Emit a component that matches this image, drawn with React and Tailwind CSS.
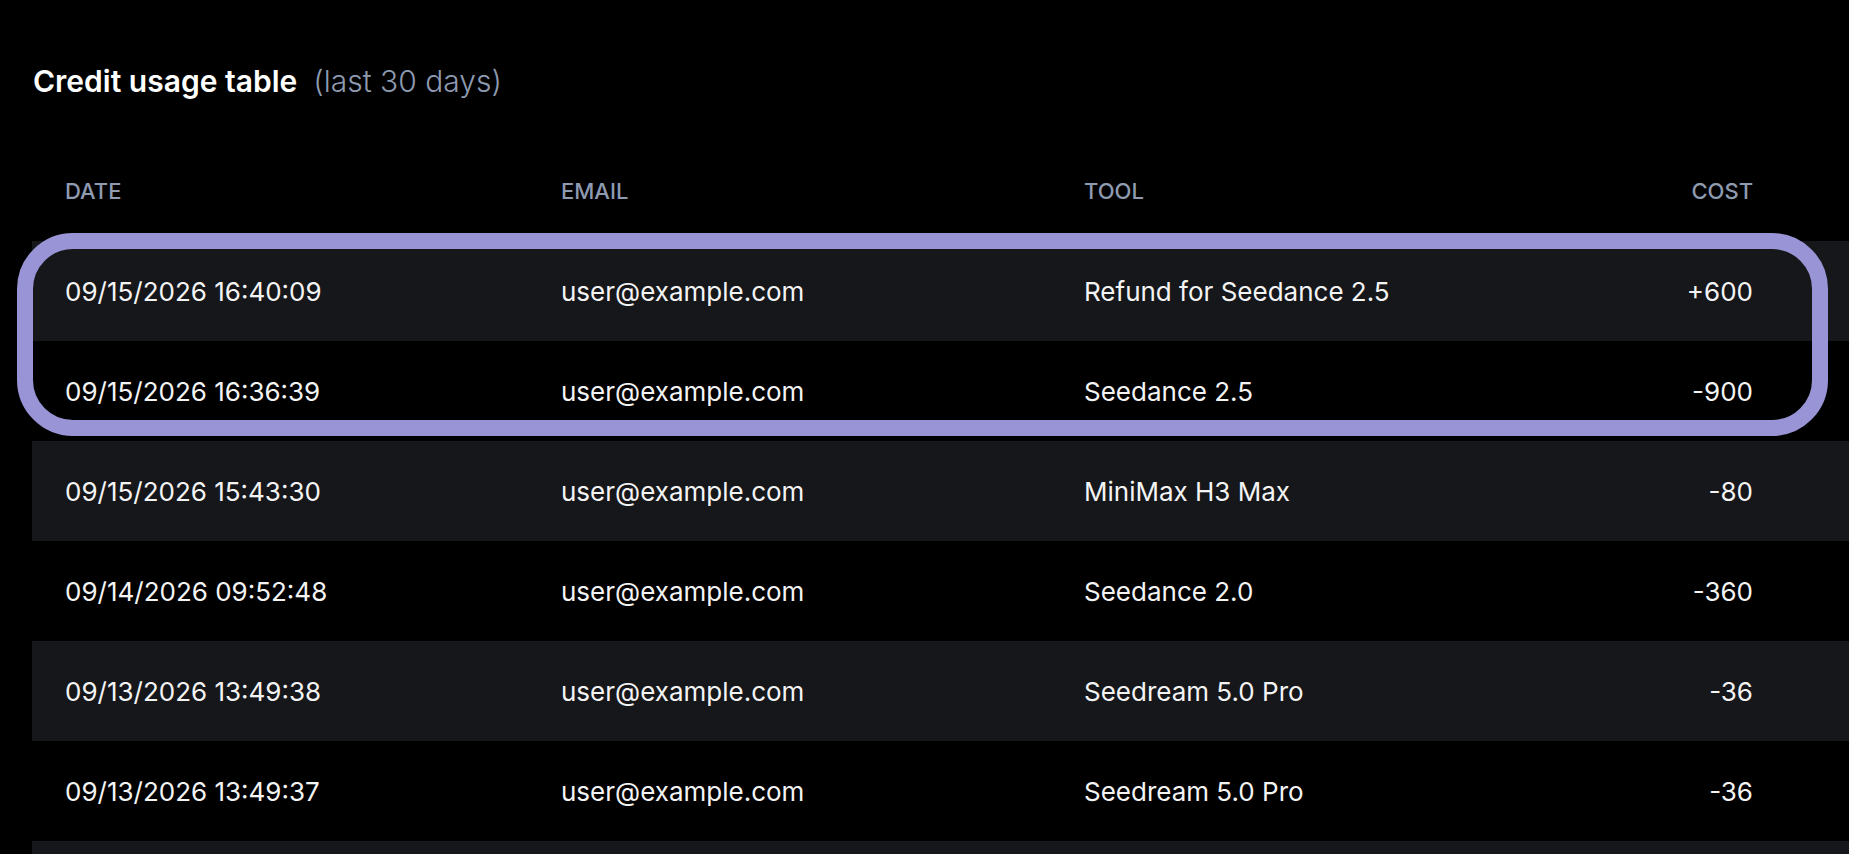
import { useState } from "react";

const rows = [
    { date: "09/15/2026 16:40:09", email: "user@example.com", tool: "Refund for Seedance 2.5", cost: "+600" },
    { date: "09/15/2026 16:36:39", email: "user@example.com", tool: "Seedance 2.5", cost: "-900" },
    { date: "09/15/2026 15:43:30", email: "user@example.com", tool: "MiniMax H3 Max", cost: "-80" },
    { date: "09/14/2026 09:52:48", email: "user@example.com", tool: "Seedance 2.0", cost: "-360" },
    { date: "09/13/2026 13:49:38", email: "user@example.com", tool: "Seedream 5.0 Pro", cost: "-36" },
    { date: "09/13/2026 13:49:37", email: "user@example.com", tool: "Seedream 5.0 Pro", cost: "-36" },
];

export default function App() {
    const [highlighted] = useState(true);

    return (
        <div className="h-screen w-full overflow-hidden bg-black text-white font-['Inter','Liberation_Sans',sans-serif]">
            <div className="flex items-baseline pt-[63px] pl-[33px]">
                <h1 className="text-[30px] leading-[36px] font-semibold text-white">Credit usage table</h1>
                <span className="ml-[16px] text-[30px] leading-[36px] font-light text-[#8d9ab0]">(last 30 days)</span>
            </div>

            <div className="ml-[32px] mt-[78px]">
                <div className="grid grid-cols-[496px_523px_1fr_200px] text-[22px] leading-[28px] font-medium text-[#8e9bb0] pb-[36px] pr-[96px]">
                    <div className="pl-[33px]">DATE</div>
                    <div className="pl-[33px]">EMAIL</div>
                    <div className="pl-[33px]">TOOL</div>
                    <div className="text-right">COST</div>
                </div>

                <div className="relative">
                    {rows.map((row, i) => (
                        <div
                            key={i}
                            className={
                                "grid grid-cols-[496px_523px_1fr_200px] h-[100px] items-center pr-[96px] text-[26px] text-[#f4f4f5] " +
                                (i % 2 === 0 ? "bg-[#16171a]" : "bg-black")
                            }
                        >
                            <div className="pl-[33px]">{row.date}</div>
                            <div className="pl-[33px]">{row.email}</div>
                            <div className="pl-[33px]">{row.tool}</div>
                            <div className="text-right">{row.cost}</div>
                        </div>
                    ))}
                    {/* next row, only its top edge is in view */}
                    <div className="h-[100px] bg-[#16171a]" />

                    {highlighted && (
                        <div className="pointer-events-none absolute -left-[15px] -top-[8px] w-[1811px] h-[203px] rounded-[56px] border-[16px] border-[#9894d5]" />
                    )}
                </div>
            </div>
        </div>
    );
}
